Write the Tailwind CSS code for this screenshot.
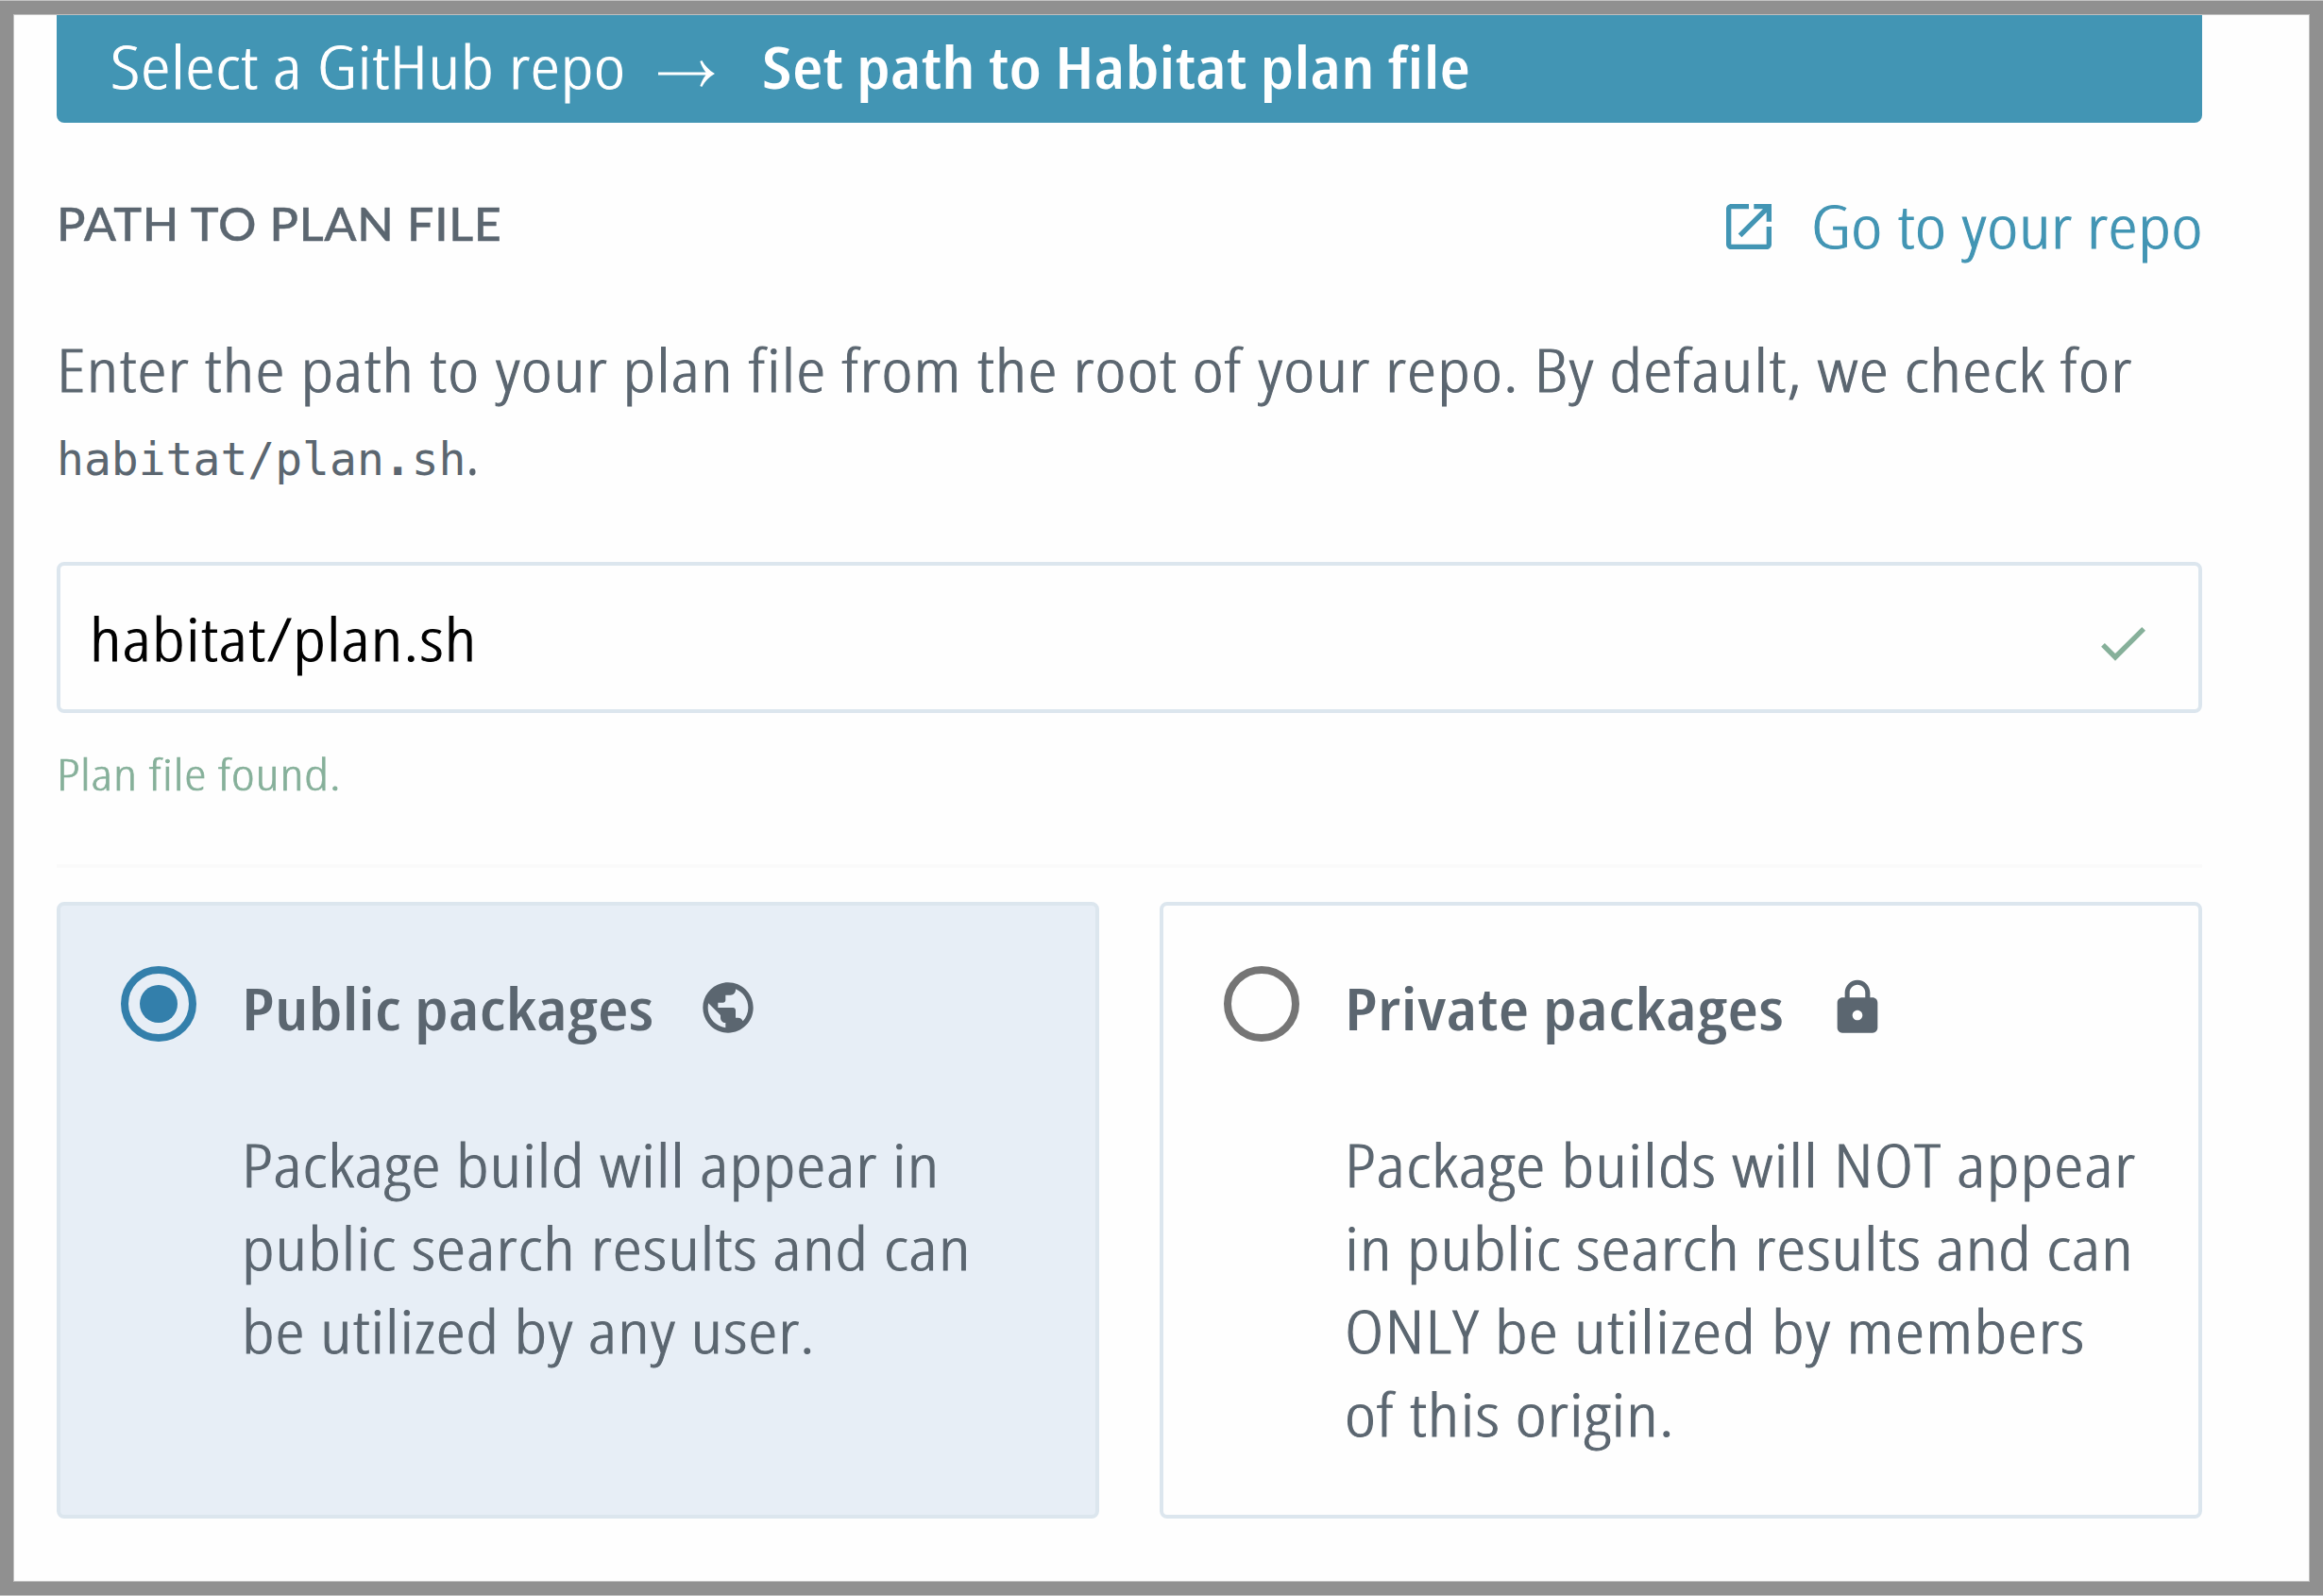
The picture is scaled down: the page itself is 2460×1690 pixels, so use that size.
<!DOCTYPE html>
<html lang="en">
<head>
<meta charset="utf-8">
<title>Set path to Habitat plan file</title>
<script src="https://cdn.jsdelivr.net/npm/@tailwindcss/browser@4"></script>
</head>
<body class="w-[2460px] h-[1690px] overflow-hidden bg-[#909090] border-y border-[#c4c4c4] px-[14px] py-[14px] font-['Open_Sans',sans-serif] font-stretch-condensed text-[62px] leading-[88px] text-[#5b6670] whitespace-nowrap">
<main class="h-[1660px] bg-[#fefefe] border border-[#c0c0c0] pl-[45px] pr-[113px] flex flex-col">

  <!-- Step bar -->
  <nav class="h-[114px] shrink-0 bg-[#4295b4] rounded-b-[8px] pl-[57px] pb-[6px] flex items-center text-white">
    <span class="w-[580px] shrink-0"><span class="inline-block origin-left scale-x-[1.27] font-light [-webkit-text-stroke:0.9px] tracking-[0.68px]">Select a GitHub repo</span></span>
    <svg class="w-[60px] h-[28px] mt-[16px] mr-[50px] shrink-0" viewBox="0 0 60 36" preserveAspectRatio="none" fill="white"><path d="M0 16.200h50.500C48 12.500 46 7.500 44.300 1.200L46.300 0C49.500 7.500 54 13.500 60 18C54 22.500 49.500 28.500 46.300 36L44.300 34.800C46 28.500 48 23.500 50.500 19.800H0z"/></svg>
    <span class="inline-block origin-left scale-x-[1.2] font-semibold tracking-[0.26px]">Set path to Habitat plan file</span>
  </nav>

  <!-- Section heading -->
  <header class="h-[84px] mt-[66px] shrink-0 flex items-center justify-between">
    <h2 class="inline-block origin-left scale-x-[1.05] pb-[2px] font-['Lato',sans-serif] font-medium [-webkit-text-stroke:0.4px] text-[48px] tracking-[0.65px]">PATH TO PLAN FILE</h2>
    <a class="flex items-center text-[#4295b4]">
      <svg class="w-[64px] h-[64px] mt-[4px] mr-[34px]" viewBox="0 0 24 24" fill="currentColor"><path d="M19 19H5V5h7V3H5c-1.110 0-2 .9-2 2v14c0 1.100.89 2 2 2h14c1.100 0 2-.9 2-2v-7h-2v7zM14 3v2h3.590l-9.830 9.830 1.410 1.410L19 6.410V10h2V3h-7z"/></svg>
      <span class="w-[414px] pt-[2px]"><span class="inline-block origin-left scale-x-[1.27] font-light [-webkit-text-stroke:0.9px] tracking-[0.53px]">Go to your repo</span></span>
    </a>
  </header>

  <div class="mt-[67px] shrink-0">
    <p class="h-[88px]"><span class="inline-block origin-left scale-x-[1.27] font-light [-webkit-text-stroke:0.9px] tracking-[0.90px]">Enter the path to your plan file from the root of your repo. By default, we check for</span></p>
    <p class="h-[88px] flex items-baseline"><code class="font-['DejaVu_Sans_Mono',monospace] text-[48px]">habitat/plan<b>.</b>sh</code><span>.</span></p>
  </div>

  <!-- Path field -->
  <div class="h-[160px] mt-[72px] shrink-0 border-4 border-[#dce6ee] rounded-[8px] pl-[31px] pr-[48px] flex items-center justify-between text-black">
    <span class="inline-block origin-left scale-x-[1.27] font-light [-webkit-text-stroke:0.9px] pt-[2px] tracking-[0.87px]">habitat/plan.sh</span>
    <svg class="w-[64px] h-[64px] mt-[12px] text-[#86b09a]" viewBox="0 0 24 24" fill="currentColor"><path d="M9 16.170L4.830 12l-1.420 1.410L9 19 21 7l-1.410-1.410z"/></svg>
  </div>
  <p class="h-[64px] mt-[32px] shrink-0 text-[46.5px] leading-[64px] text-[#86b09a]"><span class="inline-block origin-left scale-x-[1.27] font-light [-webkit-text-stroke:0.6px] tracking-[0.56px]">Plan file found.</span></p>

  <hr class="h-[4px] mt-[64px] shrink-0 border-0 bg-[#fafafa]">

  <!-- Visibility options -->
  <section class="mt-[36px] h-[653px] shrink-0 grid grid-cols-2 gap-[64px]">
    <label class="border-4 border-[#dce6ee] rounded-[8px] bg-[#e7eef6] pl-[64px] pt-[64px]">
      <span class="h-[88px] flex items-start">
        <span class="w-[80px] h-[80px] shrink-0 rounded-full border-8 border-[#337fab] flex items-center justify-center"><span class="w-[40px] h-[40px] rounded-full bg-[#337fab]"></span></span>
        <span class="ml-[48px] w-[483px] shrink-0"><span class="inline-block origin-left scale-x-[1.2] font-semibold tracking-[0.32px]">Public packages</span></span>
        <svg class="w-[64px] h-[64px] mt-[12px]" viewBox="0 0 24 24" fill="currentColor"><path d="M12 2C6.480 2 2 6.480 2 12s4.480 10 10 10 10-4.480 10-10S17.520 2 12 2zm-1 17.930c-3.950-.49-7-3.850-7-7.930 0-.62.08-1.210.21-1.790L9 15v1c0 1.100.9 2 2 2v1.930zm6.900-2.540c-.26-.81-1-1.390-1.900-1.390h-1v-3c0-.55-.45-1-1-1H8v-2h2c.55 0 1-.45 1-1V7h2c1.100 0 2-.9 2-2v-.41c2.930 1.190 5 4.060 5 7.410 0 2.080-.8 3.970-2.100 5.390z"/></svg>
      </span>
      <span class="mt-[78px] pl-[128px] flex flex-col items-start font-light [-webkit-text-stroke:0.9px]">
        <span class="origin-left scale-x-[1.27] tracking-[0.72px]">Package build will appear in</span>
        <span class="origin-left scale-x-[1.27] tracking-[0.84px]">public search results and can</span>
        <span class="origin-left scale-x-[1.27] tracking-[0.70px]">be utilized by any user.</span>
      </span>
    </label>
    <label class="border-4 border-[#dce6ee] rounded-[8px] pl-[64px] pt-[64px]">
      <span class="h-[88px] flex items-start">
        <span class="w-[80px] h-[80px] shrink-0 rounded-full border-8 border-[#757575]"></span>
        <span class="ml-[48px] w-[511px] shrink-0"><span class="inline-block origin-left scale-x-[1.2] font-semibold tracking-[0.50px]">Private packages</span></span>
        <svg class="w-[64px] h-[64px] mt-[12px]" viewBox="0 0 24 24" fill="currentColor"><path d="M18 8h-1V6c0-2.760-2.240-5-5-5S7 3.240 7 6v2H6c-1.100 0-2 .9-2 2v10c0 1.100.9 2 2 2h12c1.100 0 2-.9 2-2V10c0-1.100-.9-2-2-2zm-6 9c-1.100 0-2-.9-2-2s.9-2 2-2 2 .9 2 2-.9 2-2 2zm3.100-9H8.900V6c0-1.710 1.390-3.100 3.100-3.100s3.100 1.390 3.100 3.100v2z"/></svg>
      </span>
      <span class="mt-[78px] pl-[128px] flex flex-col items-start font-light [-webkit-text-stroke:0.9px]">
        <span class="origin-left scale-x-[1.27] tracking-[0.97px]">Package builds will NOT appear</span>
        <span class="origin-left scale-x-[1.27] tracking-[0.76px]">in public search results and can</span>
        <span class="origin-left scale-x-[1.27] tracking-[1.00px]">ONLY be utilized by members</span>
        <span class="origin-left scale-x-[1.27] tracking-[0.85px]">of this origin.</span>
      </span>
    </label>
  </section>
</main>
</body>
</html>
